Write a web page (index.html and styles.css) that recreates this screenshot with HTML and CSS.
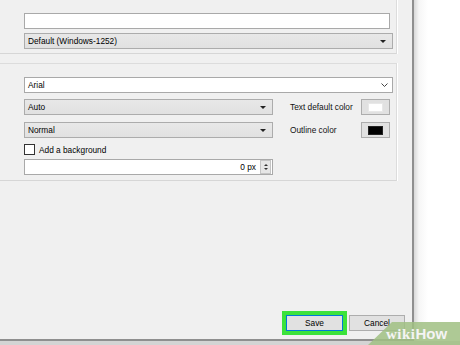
FILE: index.html
```html
<!DOCTYPE html>
<html lang="en">

<head>
    <meta charset="UTF-8">
    <meta name="viewport" content="width=device-width, initial-scale=1.0">
    <title>Subtitle settings</title>
    <link rel="stylesheet" href="styles.css">
</head>

<body>

    <div class="screen">
        <div class="dialog">

            <div class="group group-top">
                <div class="field"></div>
                <div class="combo">
                    <span>Default (Windows-1252)</span>
                    <span class="arrow"></span>
                </div>
            </div>

            <div class="group group-font">
                <div class="combo combo-white">
                    <span>Arial</span>
                    <svg class="chevron" width="7" height="4" viewBox="0 0 7 4">
                        <path d="M0.5 0.5 L3.5 3.5 L6.5 0.5" fill="none" stroke="#444" stroke-width="1"/>
                    </svg>
                </div>

                <div class="row">
                    <div class="combo combo-short">
                        <span>Auto</span>
                        <span class="arrow"></span>
                    </div>
                    <div class="label">Text default color</div>
                    <button class="swatch-btn"><span class="swatch swatch-white"></span></button>
                </div>

                <div class="row">
                    <div class="combo combo-short">
                        <span>Normal</span>
                        <span class="arrow"></span>
                    </div>
                    <div class="label">Outline color</div>
                    <button class="swatch-btn"><span class="swatch swatch-black"></span></button>
                </div>

                <label class="check">
                    <span class="box"></span>
                    <span>Add a background</span>
                </label>

                <div class="spin">
                    <span class="spin-value">0 px</span>
                    <span class="spin-btns">
                        <span class="up"></span>
                        <span class="down"></span>
                    </span>
                </div>
            </div>

            <div class="footer">
                <button class="btn btn-save">Save</button>
                <button class="btn">Cancel</button>
            </div>
        </div>

        <div class="desktop"></div>
    </div>

    <div class="bottom-strip"></div>

    <div class="watermark"><span class="wiki">wiki</span><span class="how">How</span></div>

</body>

</html>
```

FILE: styles.css
```css
body {
    margin: 0;
    padding: 0;
    width: 460px;
    height: 345px;
    overflow: hidden;
    font-family: "Liberation Sans", Arial, sans-serif;
    font-size: 8.3px;
    color: #000;
    background-color: #fff;
    position: relative;
}

.screen {
    display: flex;
    height: 341px;
}

.dialog {
    width: 412px;
    height: 339px;
    background-color: #f0f0f0;
    border-right: 2px solid #8f8f8f;
    border-bottom: 2px solid #8f8f8f;
    display: flex;
    flex-direction: column;
}

.desktop {
    flex: 1;
    background: linear-gradient(to right, #d8d8d8, #f6f6f6 5px, #fff 14px);
}

.bottom-strip {
    height: 4px;
    background-color: #d4d4d4;
}

.group {
    width: 372px;
    padding-left: 24px;
    border-right: 1px solid #dcdcdc;
    box-shadow: 1px 0 0 #fff;
}

.group-top {
    padding-top: 13px;
    padding-bottom: 4px;
    border-bottom: 1px solid #d6d6d6;
}

.group-font {
    margin-top: 9px;
    padding-top: 13px;
    padding-bottom: 5px;
    border-top: 1px solid #dcdcdc;
    border-bottom: 1px solid #d6d6d6;
}

.field {
    width: 364px;
    height: 14px;
    background-color: #fff;
    border: 1px solid #a9a9a9;
}

.combo {
    width: 362px;
    height: 14px;
    margin-top: 4px;
    padding: 0 2px 0 3px;
    background: linear-gradient(#e8e8e8, #e1e1e1);
    border: 1px solid #acacac;
    display: flex;
    align-items: center;
    justify-content: space-between;
    box-sizing: content-box;
}

.group-font > .combo {
    margin-top: 0;
}

.combo-white {
    background: #fff;
    border-color: #a9a9a9;
}

.chevron {
    margin-right: 2px;
}

.arrow {
    width: 0;
    height: 0;
    margin-right: 4px;
    border-left: 3px solid transparent;
    border-right: 3px solid transparent;
    border-top: 3px solid #222;
}

.row {
    display: flex;
    align-items: center;
    width: 366px;
    margin-top: 6px;
}

.row + .row {
    margin-top: 7px;
}

.combo-short {
    width: 242px;
    margin-top: 0;
}

.label {
    flex: 1;
    padding-left: 17px;
    color: #111;
}

.swatch-btn {
    width: 29px;
    height: 16px;
    padding: 0;
    margin: 0;
    background-color: #e1e1e1;
    border: 1px solid #adadad;
    display: flex;
    align-items: center;
    justify-content: center;
}

.swatch {
    width: 13px;
    height: 7px;
    border: 1px solid #555;
}

.swatch-white {
    background-color: #fff;
    border-color: #e8e8e8;
}

.swatch-black {
    background-color: #000;
    border-color: #222;
}

.check {
    display: flex;
    align-items: center;
    margin-top: 6px;
    height: 11px;
}

.box {
    width: 9px;
    height: 9px;
    margin-right: 4px;
    border: 1px solid #333;
    background-color: #fff;
}

.spin {
    width: 247px;
    height: 14px;
    margin-top: 4px;
    background-color: #fff;
    border: 1px solid #a9a9a9;
    display: flex;
    align-items: center;
    justify-content: flex-end;
}

.spin-value {
    margin-right: 4px;
}

.spin-btns {
    width: 9px;
    height: 12px;
    margin-right: 1px;
    background-color: #e6e6e6;
    border: 1px solid #c4c4c4;
    display: flex;
    flex-direction: column;
    align-items: center;
    justify-content: center;
    gap: 2px;
}

.up, .down {
    width: 0;
    height: 0;
    border-left: 2px solid transparent;
    border-right: 2px solid transparent;
}

.up {
    border-bottom: 2px solid #333;
}

.down {
    border-top: 2px solid #333;
}

.footer {
    margin-top: auto;
    padding: 0 7px 8px 0;
    display: flex;
    justify-content: flex-end;
    gap: 6px;
}

.btn {
    width: 56px;
    height: 16px;
    padding: 0;
    font-family: inherit;
    font-size: 8.3px;
    color: #000;
    background-color: #e1e1e1;
    border: 1px solid #adadad;
}

.btn-save {
    width: 57px;
    border-color: #0078d7;
    outline: 4px solid #3be23b;
}

.watermark {
    position: absolute;
    right: 0;
    bottom: 0;
    width: 92px;
    height: 23px;
    padding-left: 18px;
    box-sizing: border-box;
    background-color: rgba(160, 192, 130, 0.85);
    clip-path: polygon(24px 0, 100% 0, 100% 100%, 0 100%);
    color: #f4f4f4;
    font-weight: bold;
    font-size: 15px;
    line-height: 24px;
}

.wiki {
    font-family: "Liberation Serif", serif;
    letter-spacing: 0.5px;
}

.how {
    font-family: "Liberation Sans", sans-serif;
}
```
